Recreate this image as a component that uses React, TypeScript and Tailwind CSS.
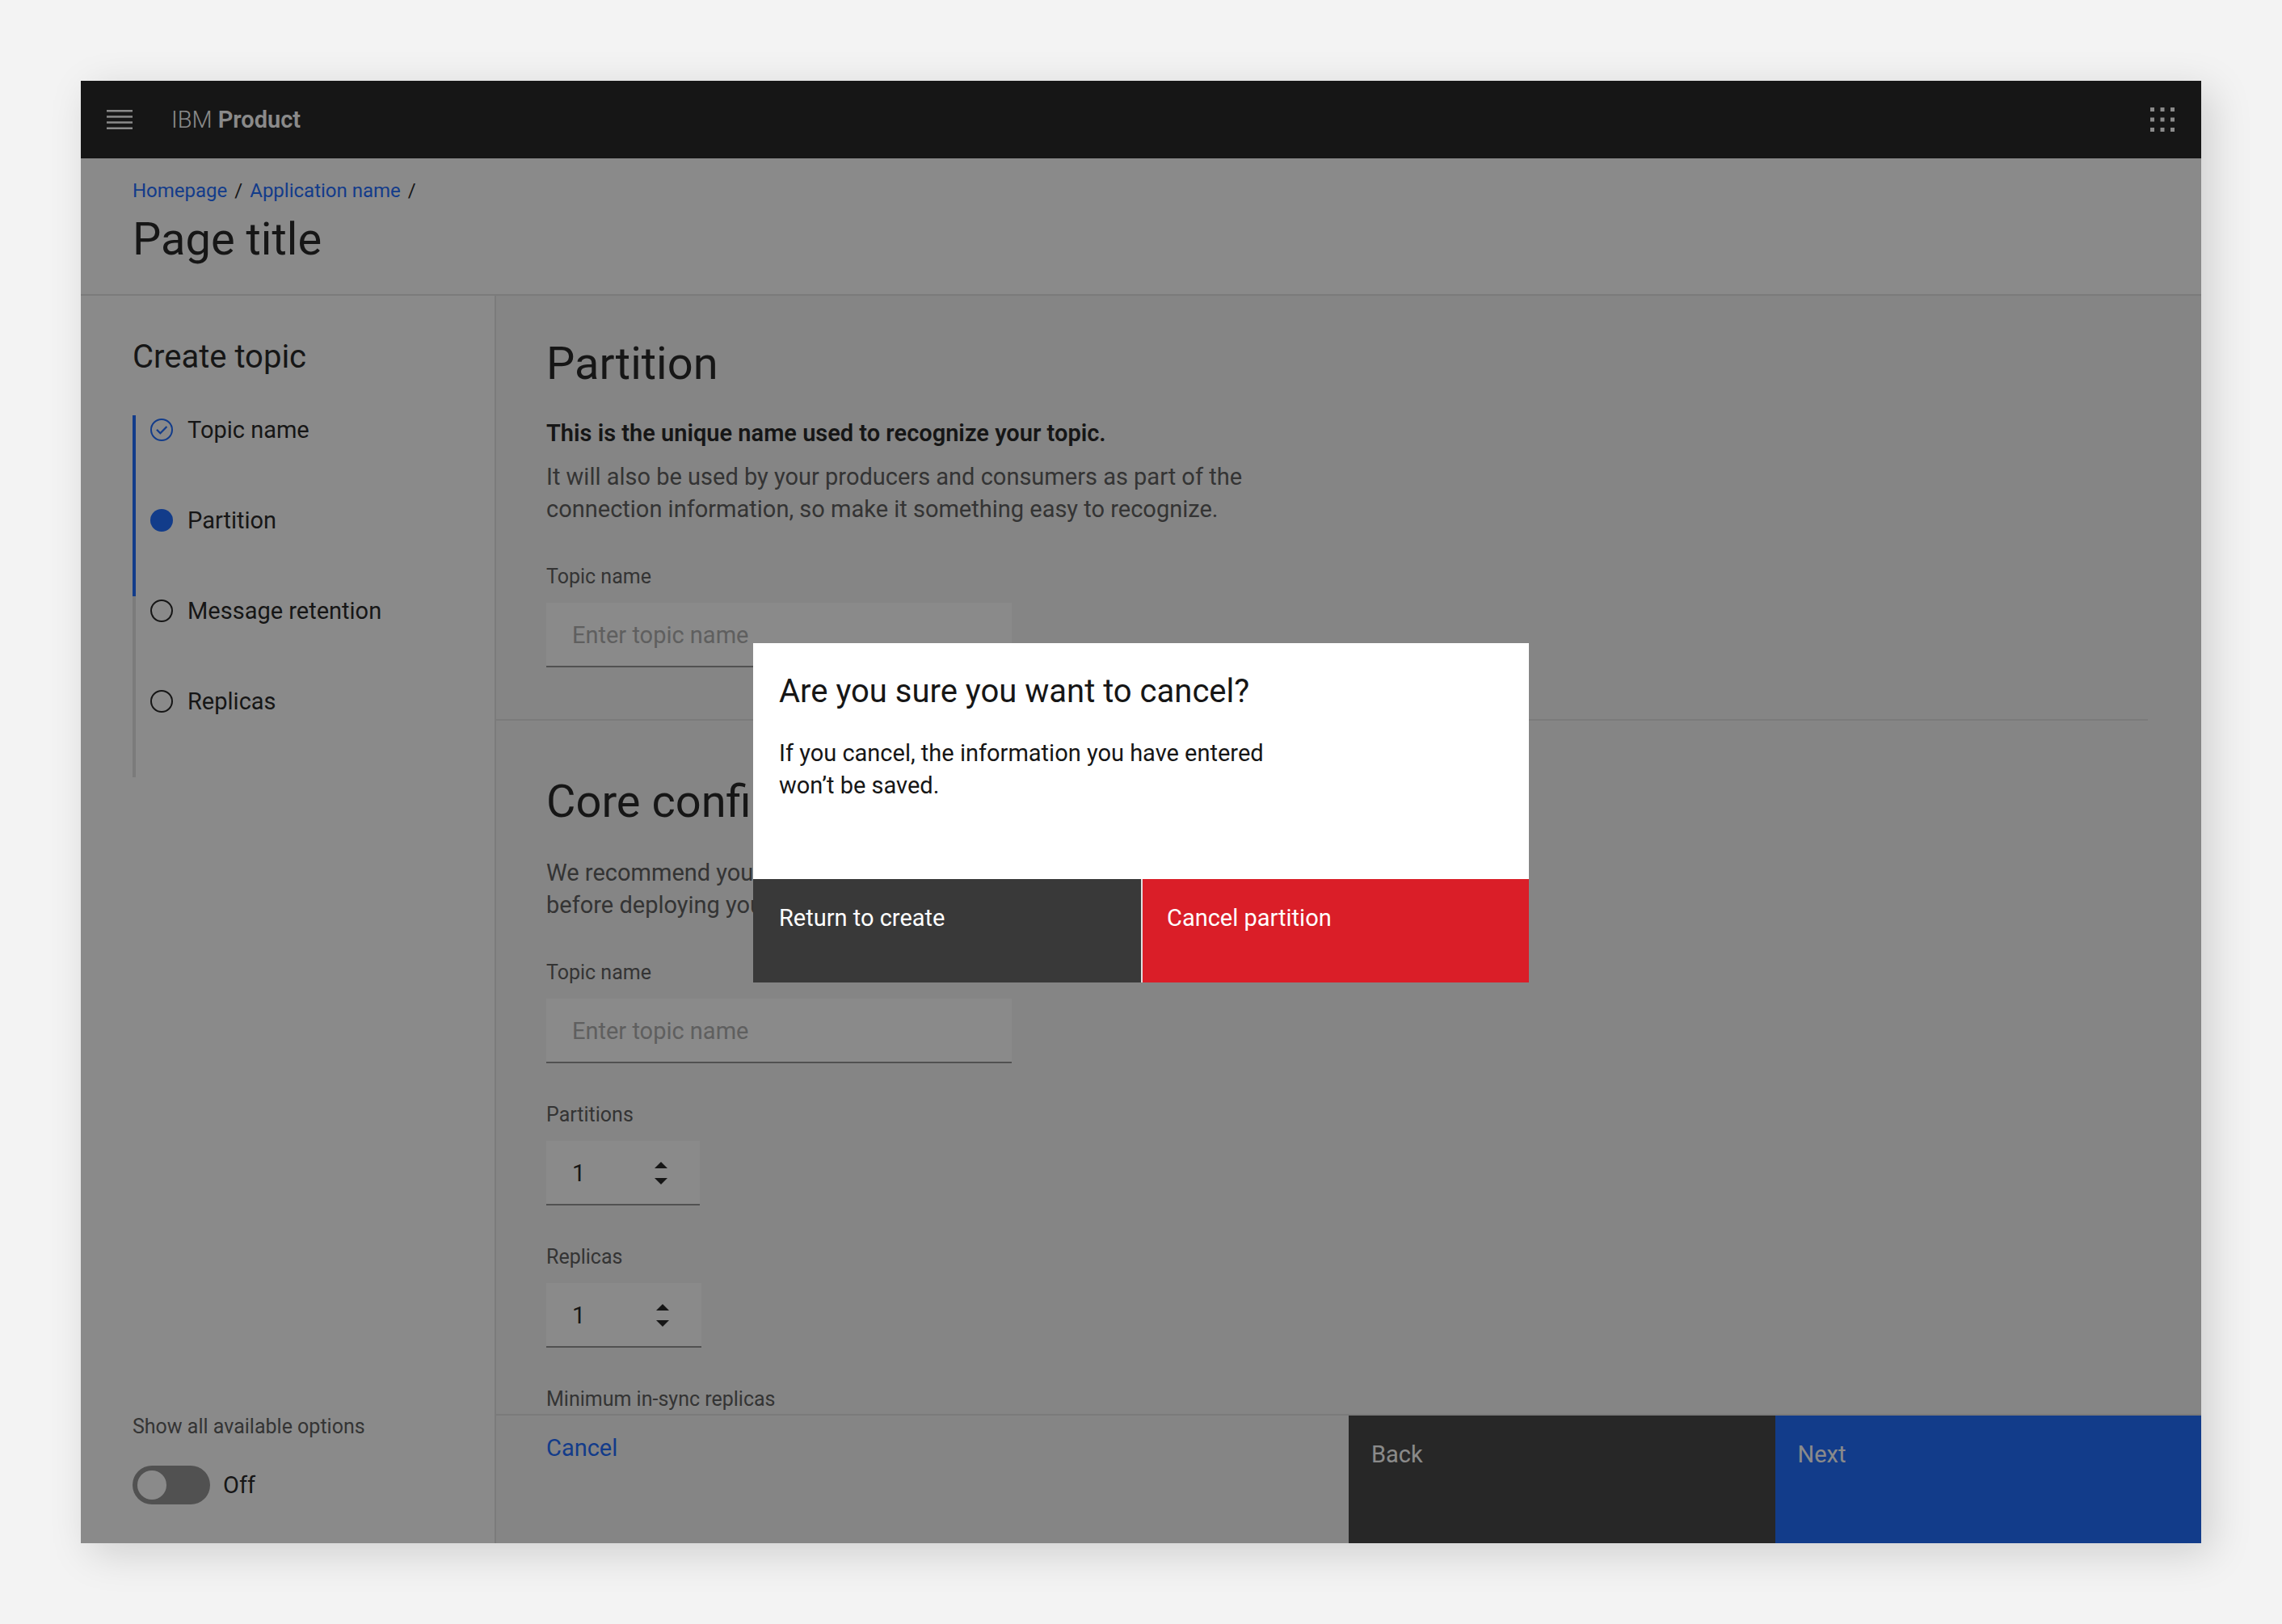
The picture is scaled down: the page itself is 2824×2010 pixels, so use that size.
import { useId, useState } from "react";
import type { ReactNode } from "react";

type StepState = "complete" | "current" | "upcoming";

const steps: { label: string; state: StepState }[] = [
  { label: "Topic name", state: "complete" },
  { label: "Partition", state: "current" },
  { label: "Message retention", state: "upcoming" },
  { label: "Replicas", state: "upcoming" },
];

function MenuIcon() {
  return (
    <svg className="h-6 w-8" viewBox="0 0 32 24" fill="currentColor" aria-hidden="true">
      <rect x="0" y="0" width="32" height="2.5" />
      <rect x="0" y="7.2" width="32" height="2.5" />
      <rect x="0" y="14.3" width="32" height="2.5" />
      <rect x="0" y="21.5" width="32" height="2.5" />
    </svg>
  );
}

function SwitcherIcon() {
  const places = [0, 12.5, 25];
  return (
    <svg className="size-[30px]" viewBox="0 0 30 30" fill="currentColor" aria-hidden="true">
      {places.map((y) => places.map((x) => <rect key={`${x}-${y}`} x={x} y={y} width="5" height="5" />))}
    </svg>
  );
}

function StepIcon({ state }: { state: StepState }) {
  if (state === "current") {
    return (
      <svg className="size-7 text-[#0f62fe]" viewBox="0 0 28 28" aria-hidden="true">
        <circle cx="14" cy="14" r="14" fill="currentColor" />
      </svg>
    );
  }
  if (state === "complete") {
    return (
      <svg className="size-7 text-[#0f62fe]" viewBox="0 0 28 28" fill="none" stroke="currentColor" aria-hidden="true">
        <circle cx="14" cy="14" r="13" strokeWidth="2" />
        <path d="M8 13.800l4.400 4.400L20.400 10" strokeWidth="2.300" />
      </svg>
    );
  }
  return (
    <svg className="size-7 text-[#161616]" viewBox="0 0 28 28" fill="none" stroke="currentColor" aria-hidden="true">
      <circle cx="14" cy="14" r="13" strokeWidth="2" />
    </svg>
  );
}

function TextField({ label, placeholder }: { label: string; placeholder: string }) {
  const id = useId();
  return (
    <div className="mt-12 flex flex-col">
      <label htmlFor={id} className="text-[25px] leading-8 text-[#525252]">
        {label}
      </label>
      <input
        id={id}
        type="text"
        placeholder={placeholder}
        className="mt-4 h-20 w-full max-w-[576px] border-b-2 border-[#8d8d8d] bg-white px-8 pt-0.5 text-[29px] text-[#161616] outline-none placeholder:text-[#a8a8a8]"
      />
    </div>
  );
}

function NumberField({ label, width }: { label: string; width: string }) {
  const id = useId();
  const [value, setValue] = useState(1);
  return (
    <div className="mt-12 flex flex-col">
      <label htmlFor={id} className="text-[25px] leading-8 text-[#525252]">
        {label}
      </label>
      <div
        className={`mt-4 flex h-20 items-center justify-between border-b-2 border-[#8d8d8d] bg-white pt-0.5 pr-10 pl-8 ${width}`}
      >
        <input
          id={id}
          type="text"
          inputMode="numeric"
          value={value}
          onChange={(e) => setValue(Number(e.target.value) || 0)}
          className="w-16 bg-transparent text-[29px] leading-10 text-[#161616] outline-none"
        />
        <div className="flex flex-col gap-3 text-[#161616]">
          <button type="button" aria-label={`Increase ${label}`} onClick={() => setValue(value + 1)}>
            <svg className="h-2 w-4" viewBox="0 0 16 8" fill="currentColor" aria-hidden="true">
              <path d="M0 8L8 0l8 8z" />
            </svg>
          </button>
          <button type="button" aria-label={`Decrease ${label}`} onClick={() => setValue(Math.max(0, value - 1))}>
            <svg className="h-2 w-4" viewBox="0 0 16 8" fill="currentColor" aria-hidden="true">
              <path d="M0 0l8 8 8-8z" />
            </svg>
          </button>
        </div>
      </div>
    </div>
  );
}

function SectionTitle({ children }: { children: ReactNode }) {
  return <h2 className="text-[56px] leading-[64px] text-[#161616]">{children}</h2>;
}

function Sidebar() {
  const [showAll, setShowAll] = useState(false);
  return (
    <aside className="flex w-[514px] shrink-0 flex-col border-r-2 border-[#e0e0e0] bg-white pt-[52px] pb-12 pl-16">
      <h2 className="text-[40px] leading-[48px]">Create topic</h2>
      <ol className="mt-12 flex flex-col">
        {steps.map((step) => (
          <li
            key={step.label}
            className={
              step.state === "upcoming"
                ? "h-28 border-l-4 border-[#e0e0e0] pl-[18px]"
                : "h-28 border-l-4 border-[#0f62fe] pl-[18px]"
            }
          >
            <button type="button" className="flex h-9 items-center gap-[18px] text-[29px] leading-9">
              <StepIcon state={step.state} />
              {step.label}
            </button>
          </li>
        ))}
      </ol>
      <div className="mt-auto flex flex-col gap-8">
        <label htmlFor="show-all" className="text-[25px] leading-8 text-[#525252]">
          Show all available options
        </label>
        <div className="flex items-center gap-4">
          <input
            id="show-all"
            type="checkbox"
            role="switch"
            checked={showAll}
            onChange={(e) => setShowAll(e.target.checked)}
            className="h-12 w-24 appearance-none rounded-full bg-[#8d8d8d] p-1.5 before:block before:size-9 before:rounded-full before:bg-white checked:bg-[#198038] checked:before:ml-12"
          />
          <span className="text-[29px] leading-10">{showAll ? "On" : "Off"}</span>
        </div>
      </div>
    </aside>
  );
}

function CancelDialog() {
  return (
    <div className="absolute inset-0 flex items-center justify-center bg-[#161616]/50 pt-0.5">
      <div
        role="dialog"
        aria-modal="true"
        aria-labelledby="dialog-title"
        className="flex w-full max-w-[960px] flex-col bg-white"
      >
        <div className="px-8 pt-9 pb-24">
          <h2 id="dialog-title" className="text-[40px] leading-[48px]">
            Are you sure you want to cancel?
          </h2>
          <p className="mt-8 max-w-[640px] text-[29px] leading-10">
            If you cancel, the information you have entered won’t be saved.
          </p>
        </div>
        <div className="grid h-32 grid-cols-2 text-[29px] leading-10 text-white">
          <button type="button" className="flex items-start bg-[#393939] px-8 pt-7 text-left">
            Return to create
          </button>
          <button
            type="button"
            className="flex items-start border-l-2 border-[#e0e0e0] bg-[#da1e28] px-[30px] pt-7 text-left"
          >
            Cancel partition
          </button>
        </div>
      </div>
    </div>
  );
}

export default function App() {
  return (
    <div className="flex h-screen flex-col bg-[#f3f3f3] p-[100px] font-['Roboto',sans-serif] text-[#161616]">
      <div className="relative flex min-h-0 flex-1 flex-col bg-white shadow-[12px_12px_48px_rgba(0,0,0,0.15)]">
        <header className="flex h-24 shrink-0 items-center justify-between bg-[#161616] pr-[33px] pl-8 text-white">
          <div className="flex items-center gap-12">
            <button type="button" aria-label="Open menu">
              <MenuIcon />
            </button>
            <span className="text-[29px] leading-10 font-light">
              IBM <strong className="font-semibold">Product</strong>
            </span>
          </div>
          <button type="button" aria-label="Switch product">
            <SwitcherIcon />
          </button>
        </header>

        <div className="shrink-0 border-b-2 border-[#e0e0e0] px-16 pt-6 pb-9">
          <nav aria-label="Breadcrumb">
            <ol className="flex gap-[9px] text-[24px] leading-8">
              <li>
                <a href="#home" className="text-[#0f62fe]">
                  Homepage
                </a>
              </li>
              <li aria-hidden="true">/</li>
              <li>
                <a href="#application" className="text-[#0f62fe]">
                  Application name
                </a>
              </li>
              <li aria-hidden="true">/</li>
            </ol>
          </nav>
          <h1 className="mt-3 text-[56px] leading-[64px]">Page title</h1>
        </div>

        <div className="flex min-h-0 flex-1">
          <Sidebar />
          <div className="flex min-w-0 flex-1 flex-col bg-[#f4f4f4]">
            <main className="min-h-0 flex-1 overflow-hidden">
              <section className="mr-[66px] border-b-2 border-[#e0e0e0] pt-[52px] pb-16 pl-[62px]">
                <SectionTitle>Partition</SectionTitle>
                <p className="mt-[34px] text-[29px] leading-10 font-semibold">
                  This is the unique name used to recognize your topic.
                </p>
                <p className="mt-3.5 max-w-[900px] text-[29px] leading-10 text-[#525252]">
                  It will also be used by your producers and consumers as part of the connection information, so make
                  it something easy to recognize.
                </p>
                <TextField label="Topic name" placeholder="Enter topic name" />
              </section>
              <section className="mr-[66px] pt-[68px] pl-[62px]">
                <SectionTitle>Core configuration</SectionTitle>
                <p className="mt-9 max-w-[900px] text-[29px] leading-10 text-[#525252]">
                  We recommend you fill out and review this information
                  <br />
                  before deploying your topic.
                </p>
                <TextField label="Topic name" placeholder="Enter topic name" />
                <NumberField label="Partitions" width="w-[190px]" />
                <NumberField label="Replicas" width="w-48" />
                <p className="mt-12 text-[25px] leading-8 text-[#525252]">Minimum in-sync replicas</p>
              </section>
            </main>
            <footer className="flex h-40 shrink-0 border-t-2 border-[#e0e0e0] text-[29px] leading-10">
              <div className="flex-1 pt-5 pl-[62px]">
                <button type="button" className="text-[#0f62fe]">
                  Cancel
                </button>
              </div>
              <button type="button" className="flex w-1/4 items-start bg-[#393939] px-7 pt-7 text-left text-white">
                Back
              </button>
              <button type="button" className="flex w-1/4 items-start bg-[#0f62fe] px-7 pt-7 text-left text-white">
                Next
              </button>
            </footer>
          </div>
        </div>

        <CancelDialog />
      </div>
    </div>
  );
}
